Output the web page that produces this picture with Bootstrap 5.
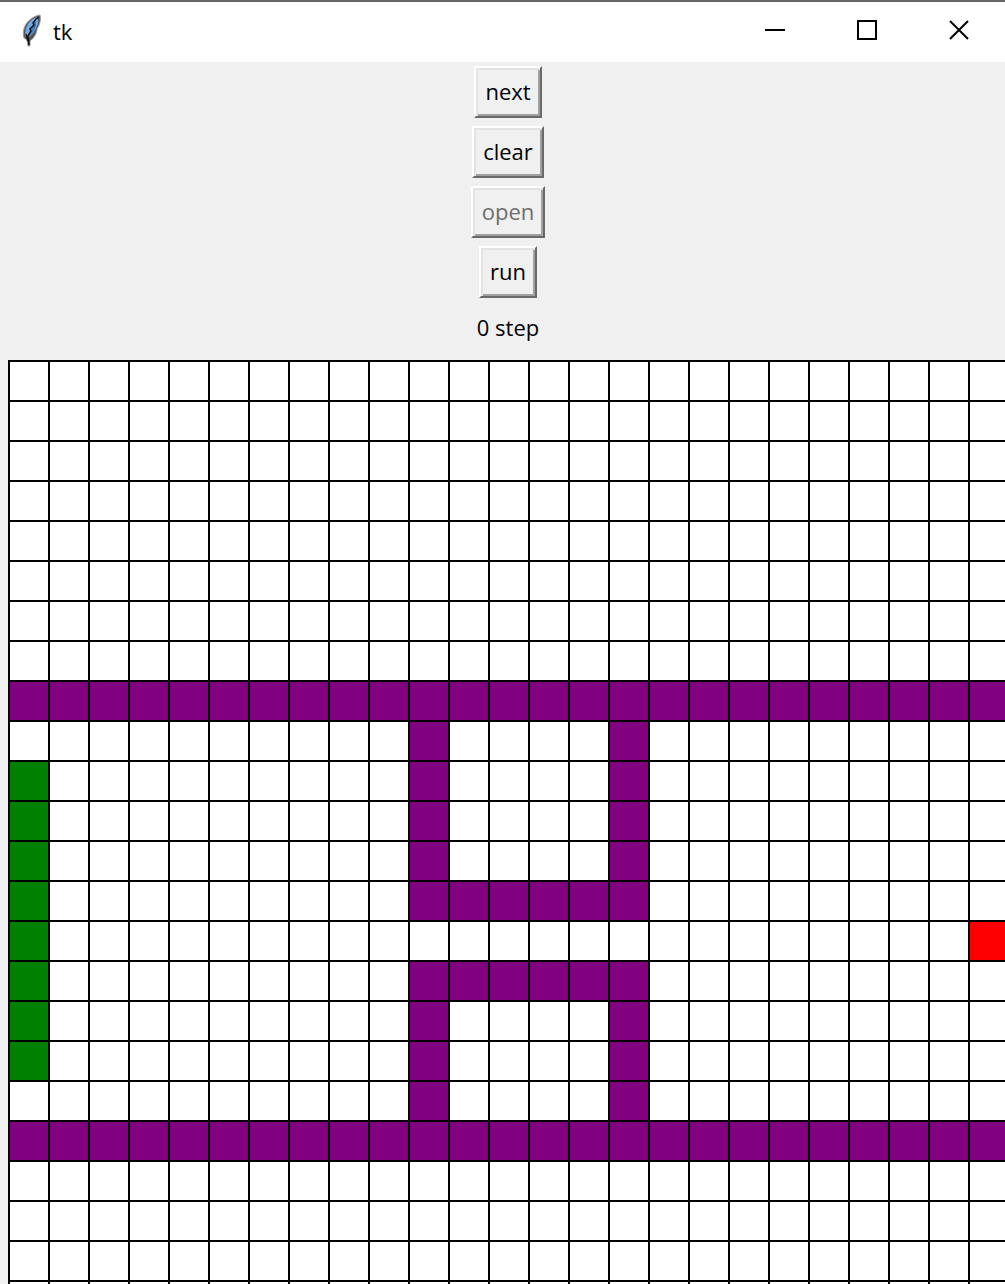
<!DOCTYPE html>
<html lang="en">
<head>
<meta charset="utf-8">
<meta name="viewport" content="width=device-width, initial-scale=1">
<title>tk</title>
<link href="https://cdn.jsdelivr.net/npm/bootstrap@5.3.0/dist/css/bootstrap.min.css" rel="stylesheet">
<style>
  body { background: #f0f0f0; color: #000; font: 22px/28px "Open Sans", "Noto Sans", sans-serif; }
  .title-bar { height: 62px; border-top: 2px solid #666; background: #fff; }
  .app-title { padding: 12px 0 0 16px; }
  .window-btn { width: 92px; height: 56px; padding: 0; border: 0; background: transparent; color: #000; }
  .window-btn:hover { background: #e5e5e5; }
  .tk-frame { width: max-content; padding: 4px 0 0 8px; }
  .tk-btn {
    height: 52px; padding: 0 9px 2px; background: #f0f0f0; color: #000; line-height: 28px;
    border: 2px solid; border-color: #fff #696969 #696969 #fff;
    box-shadow: inset 2px 2px #e3e3e3, inset -2px -2px #a0a0a0;
  }
  .tk-btn:disabled { color: #6d6d6d; }
  .step-count { padding: 7px 0 19px; }
  .board { display: grid; grid-template-columns: repeat(25, 40px); grid-auto-rows: 40px; }
  .cell { background: #fff; border: solid #000; border-width: 2px 0 0 2px; }
  .wall { background: #800080; }
  .start { background: #008000; }
  .goal { background: #f00; }
</style>
<script src="https://cdn.jsdelivr.net/npm/bootstrap@5.3.0/dist/js/bootstrap.bundle.min.js"></script>
</head>
<body class="vh-100 overflow-hidden">
<header class="title-bar d-flex align-items-start justify-content-between">
  <div class="app-title d-flex align-items-center gap-2">
    <svg width="29" height="34" viewBox="0 0 29 34" aria-hidden="true">
      <path d="M24 1C18 2 12 6 9 12C7 16 7 21 8 24L11 26L12 32H14L14 27C18 24 21 19 21 15C24 10 25 6 24 1Z" fill="#555" stroke="#999" stroke-width="1"/>
      <path d="M22 3C16 4 12 9 10 14L9 22L12 24L18 18L20 14L22 9Z" fill="#74a9e8"/>
      <path d="M20 7L17 10L18 12L14 17L13 22L18 17L20 12Z" fill="#397bc8"/>
      <path d="M23 3L20 5L17 9L18 11L14 15L15 17L12 22L13 31M10 20L12 27" fill="none" stroke="#111" stroke-width="1.5"/>
    </svg>
    <span>tk</span>
  </div>
  <div class="d-flex">
    <button class="window-btn d-flex align-items-center justify-content-center" type="button" aria-label="Minimize"><svg width="20" height="20" aria-hidden="true"><path d="M0 10H20" stroke="currentColor" stroke-width="2"/></svg></button>
    <button class="window-btn d-flex align-items-center justify-content-center" type="button" aria-label="Maximize"><svg width="20" height="20" aria-hidden="true"><path d="M1 1H19V19H1Z" fill="none" stroke="currentColor" stroke-width="2"/></svg></button>
    <button class="window-btn d-flex align-items-center justify-content-center" type="button" aria-label="Close"><svg width="20" height="20" aria-hidden="true"><path d="M1 1L19 19M19 1L1 19" stroke="currentColor" stroke-width="2"/></svg></button>
  </div>
</header>
<main class="tk-frame">
  <div class="d-flex flex-column align-items-center gap-2">
    <button class="tk-btn" id="next" type="button">next</button>
    <button class="tk-btn" id="clear" type="button">clear</button>
    <button class="tk-btn" id="open" type="button" disabled>open</button>
    <button class="tk-btn" id="run" type="button">run</button>
    <div class="step-count" id="steps">0 step</div>
  </div>
  <div class="board" id="board"></div>
</main>
<script>
  // # wall, S start, G goal, . empty
  const full = "#".repeat(25), empty = ".".repeat(25);
  const posts = ".........#....#.........";
  const bar   = ".........######.........";
  const rows = [
    ...Array(8).fill(empty), full,
    "." + posts, "S" + posts, "S" + posts, "S" + posts,
    "S" + bar, "S" + ".".repeat(23) + "G", "S" + bar,
    "S" + posts, "S" + posts, "." + posts,
    full, ...Array(5).fill(empty)
  ];
  const kinds = { "#": " wall", S: " start", G: " goal", ".": "" };
  const board = document.getElementById("board");
  for (const row of rows) {
    for (const mark of row) {
      const cell = document.createElement("div");
      cell.className = "cell" + kinds[mark];
      board.append(cell);
    }
  }
</script>
</body>
</html>
